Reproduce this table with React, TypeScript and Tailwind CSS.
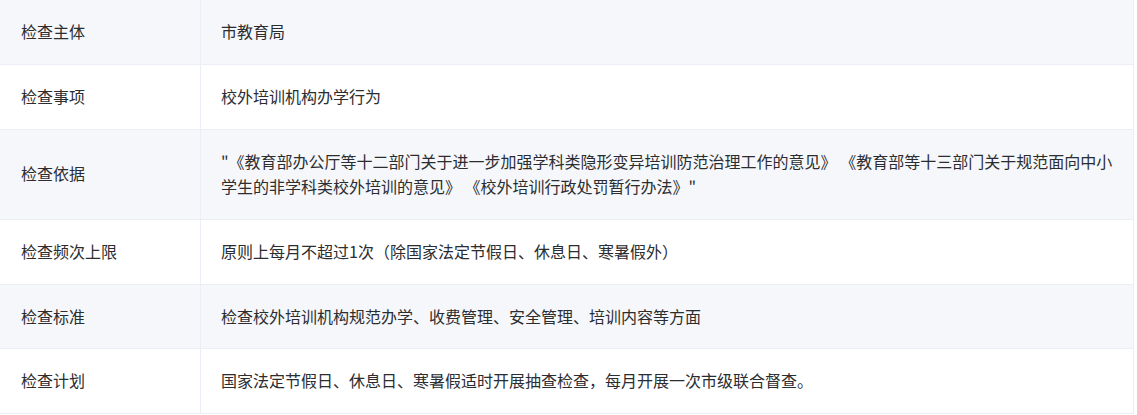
import React from "react";

const rows: { label: string; value: React.ReactNode }[] = [
  { label: "检查主体", value: "市教育局" },
  { label: "检查事项", value: "校外培训机构办学行为" },
  {
    label: "检查依据",
    value:
      "\"《教育部办公厅等十二部门关于进一步加强学科类隐形变异培训防范治理工作的意见》 《教育部等十三部门关于规范面向中小学生的非学科类校外培训的意见》 《校外培训行政处罚暂行办法》\"",
  },
  { label: "检查频次上限", value: "原则上每月不超过1次（除国家法定节假日、休息日、寒暑假外）" },
  { label: "检查标准", value: "检查校外培训机构规范办学、收费管理、安全管理、培训内容等方面" },
  { label: "检查计划", value: "国家法定节假日、休息日、寒暑假适时开展抽查检查，每月开展一次市级联合督查。" },
];

export default function App() {
  return (
    <div
      className="w-[1137px] h-[415px] bg-white overflow-hidden"
      style={{ fontFamily: '"Microsoft YaHei", "Noto Sans CJK SC", "Noto Sans", sans-serif' }}
    >
      <div className="w-[1134px] border-r border-[#ebeef5] text-[16px] text-[#2b2d31]">
        {rows.map((r, i) => (
          <div
            key={i}
            className={`flex border-b border-[#ebeef5] ${i % 2 === 0 ? "bg-[#f5f7fa]" : "bg-white"}`}
          >
            <div className="w-[201px] shrink-0 border-r border-[#ebeef5] pl-[21px] pr-[20px] py-[19.125px] leading-[25.5px] flex items-center">
              {r.label}
            </div>
            <div className="flex-1 pl-[20px] pr-[15px] py-[19.125px] leading-[25.5px] flex items-center">
              <span>{r.value}</span>
            </div>
          </div>
        ))}
      </div>
    </div>
  );
}
